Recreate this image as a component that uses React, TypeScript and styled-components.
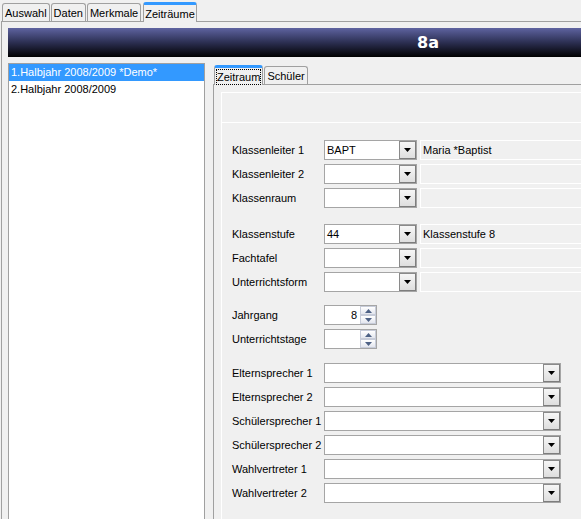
import React from 'react';
import styled, { createGlobalStyle } from 'styled-components';

const GlobalStyle = createGlobalStyle`
  html, body {
    margin: 0;
    padding: 0;
    background: #f0f0f0;
    overflow: hidden;
  }
  body {
    font-family: "Liberation Sans", Arial, sans-serif;
    font-size: 11px;
    color: #000;
  }
`;

const Window = styled.div`
  width: 581px;
  height: 519px;
  display: flex;
  flex-direction: column;
  overflow: hidden;
`;

const TabStrip = styled.div<{ $inset: number }>`
  display: flex;
  align-items: flex-end;
  height: 21px;
  padding-left: ${(p) => p.$inset}px;
  gap: 1px;
  position: relative;
  z-index: 1;
`;

const Tab = styled.div<{ $active?: boolean }>`
  box-sizing: border-box;
  height: ${(p) => (p.$active ? 20 : 18)}px;
  padding: 0 ${(p) => (p.$active ? 1 : 2)}px;
  margin: ${(p) => (p.$active ? '0 0 -1px 1px' : '0')};
  display: flex;
  align-items: center;
  background: #f0f0f0;
  border: 1px solid #a0a0a0;
  border-top: ${(p) => (p.$active ? '3px solid #3399ff' : '1px solid #a0a0a0')};
  border-bottom: none;
  border-radius: 3px 3px 0 0;
  white-space: nowrap;
`;

const FocusLabel = styled.span`
  border: 1px dotted #000;
  line-height: 14px;
`;

const Panel = styled.div`
  flex: 1;
  display: flex;
  flex-direction: column;
  margin-left: 1px;
  border-top: 1px solid #a0a0a0;
  border-left: 1px solid #a0a0a0;
  padding: 6px 0 0 6px;
  min-height: 0;
`;

const Header = styled.div`
  height: 29px;
  display: flex;
  align-items: center;
  padding-left: 409px;
  background: linear-gradient(to bottom, #5e63a0 0%, #2c2f52 50%, #000 100%);
  color: #fff;
  font-weight: bold;
  font-size: 16px;
  font-family: "DejaVu Sans", "Liberation Sans", sans-serif;
`;

const Body = styled.div`
  flex: 1;
  display: flex;
  gap: 8px;
  margin-top: 6px;
  min-height: 0;
`;

const ListBox = styled.div`
  width: 197px;
  flex-shrink: 0;
  box-sizing: border-box;
  background: #fff;
  border: 1px solid #a0a0a0;
  border-bottom: none;
  display: flex;
  flex-direction: column;
`;

const ListItem = styled.div<{ $selected?: boolean }>`
  height: 17px;
  line-height: 17px;
  padding-left: 2px;
  white-space: nowrap;
  background: ${(p) => (p.$selected ? '#3399ff' : 'transparent')};
  color: ${(p) => (p.$selected ? '#fff' : '#000')};
`;

const Detail = styled.div`
  flex: 1;
  display: flex;
  flex-direction: column;
  min-width: 0;
`;

const InnerPanel = styled.div`
  flex: 1;
  display: flex;
  flex-direction: column;
  border-top: 1px solid #a0a0a0;
  border-left: 1px solid #a0a0a0;
  padding: 7px 0 0 7px;
`;

const TopPane = styled.div`
  height: 29px;
  border-top: 1px solid #fff;
  border-left: 1px solid #fff;
`;

const FormPane = styled.div`
  flex: 1;
  border-top: 1px solid #fff;
  border-left: 1px solid #fff;
  padding: 17px 0 0 10px;
  display: flex;
  flex-direction: column;
`;

const Group = styled.div<{ $gap: number }>`
  display: flex;
  flex-direction: column;
  gap: 4px;
  margin-top: ${(p) => p.$gap}px;
`;

const Row = styled.div`
  display: flex;
  align-items: center;
  height: 20px;
`;

const Label = styled.div`
  width: 92px;
  flex-shrink: 0;
  white-space: nowrap;
`;

const Combo = styled.div<{ $width: number }>`
  box-sizing: border-box;
  width: ${(p) => p.$width}px;
  flex-shrink: 0;
  height: 20px;
  display: flex;
  align-items: center;
  background: #fff;
  border: 1px solid #a5a5a5;
  padding: 0 0 0 2px;
`;

const ComboText = styled.span`
  flex: 1;
`;

const DropButton = styled.div`
  box-sizing: border-box;
  width: 17px;
  height: 18px;
  display: flex;
  align-items: center;
  justify-content: center;
  background: linear-gradient(to bottom, #f6f6f6, #dedede);
  border: 1px solid #7d7d7d;
  border-top-color: #8a8a8a;
  border-left-color: #8a8a8a;
`;

const InfoField = styled.div`
  flex: 1;
  box-sizing: border-box;
  height: 20px;
  margin-left: 3px;
  padding-left: 2px;
  display: flex;
  align-items: center;
  border: 1px solid #fff;
  border-right: none;
  white-space: nowrap;
`;

const Spinner = styled.div`
  box-sizing: border-box;
  width: 53px;
  height: 20px;
  display: flex;
  background: #fff;
  border: 1px solid #a5a5a5;
`;

const SpinValue = styled.div`
  flex: 1;
  text-align: right;
  padding-right: 3px;
  line-height: 18px;
`;

const SpinButtons = styled.div`
  width: 16px;
  display: flex;
  flex-direction: column;
`;

const SpinButton = styled.div`
  flex: 1;
  display: flex;
  align-items: center;
  justify-content: center;
  background: linear-gradient(to bottom, #ffffff, #e3e6ee);
  border: 1px solid #c7ccd9;
`;

const Arrow = () => (
  <svg width="7" height="4" viewBox="0 0 7 4">
    <polygon points="0,0 7,0 3.5,4" fill="#000" />
  </svg>
);

const SpinArrow = ({ up }: { up?: boolean }) => (
  <svg width="7" height="4" viewBox="0 0 7 4">
    <polygon points={up ? '0,4 7,4 3.5,0' : '0,0 7,0 3.5,4'} fill="#4d6185" />
  </svg>
);

type ComboRow = { label: string; value?: string; info?: string; wide?: boolean };

const ComboField = ({ label, value, info, wide }: ComboRow) => (
  <Row>
    <Label>{label}</Label>
    <Combo $width={wide ? 237 : 93}>
      <ComboText>{value}</ComboText>
      <DropButton>
        <Arrow />
      </DropButton>
    </Combo>
    {!wide && <InfoField>{info}</InfoField>}
  </Row>
);

const SpinField = ({ label, value }: { label: string; value?: string }) => (
  <Row>
    <Label>{label}</Label>
    <Spinner>
      <SpinValue>{value}</SpinValue>
      <SpinButtons>
        <SpinButton>
          <SpinArrow up />
        </SpinButton>
        <SpinButton>
          <SpinArrow />
        </SpinButton>
      </SpinButtons>
    </Spinner>
  </Row>
);

const teachers: ComboRow[] = [
  { label: 'Klassenleiter 1', value: 'BAPT', info: 'Maria *Baptist' },
  { label: 'Klassenleiter 2' },
  { label: 'Klassenraum' },
];

const levels: ComboRow[] = [
  { label: 'Klassenstufe', value: '44', info: 'Klassenstufe 8' },
  { label: 'Fachtafel' },
  { label: 'Unterrichtsform' },
];

const speakers = [
  'Elternsprecher 1',
  'Elternsprecher 2',
  'Schülersprecher 1',
  'Schülersprecher 2',
  'Wahlvertreter 1',
  'Wahlvertreter 2',
];

function App() {
  return (
    <>
      <GlobalStyle />
      <Window>
        <TabStrip $inset={2}>
          <Tab>Auswahl</Tab>
          <Tab>Daten</Tab>
          <Tab>Merkmale</Tab>
          <Tab $active>Zeiträume</Tab>
        </TabStrip>
        <Panel>
          <Header>8a</Header>
          <Body>
            <ListBox>
              <ListItem $selected>1.Halbjahr 2008/2009 *Demo*</ListItem>
              <ListItem>2.Halbjahr 2008/2009</ListItem>
            </ListBox>
            <Detail>
              <TabStrip $inset={0}>
                <Tab $active>
                  <FocusLabel>Zeitraum</FocusLabel>
                </Tab>
                <Tab>Schüler</Tab>
              </TabStrip>
              <InnerPanel>
                <TopPane />
                <FormPane>
                  <Group $gap={0}>
                    {teachers.map((r) => (
                      <ComboField key={r.label} {...r} />
                    ))}
                  </Group>
                  <Group $gap={16}>
                    {levels.map((r) => (
                      <ComboField key={r.label} {...r} />
                    ))}
                  </Group>
                  <Group $gap={13}>
                    <SpinField label="Jahrgang" value="8" />
                    <SpinField label="Unterrichtstage" />
                  </Group>
                  <Group $gap={14}>
                    {speakers.map((s) => (
                      <ComboField key={s} label={s} wide />
                    ))}
                  </Group>
                </FormPane>
              </InnerPanel>
            </Detail>
          </Body>
        </Panel>
      </Window>
    </>
  );
}

export default App;
